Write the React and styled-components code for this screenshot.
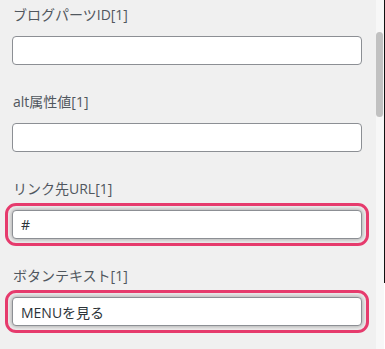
import React from 'react';
import styled, { createGlobalStyle } from 'styled-components';

const GlobalStyle = createGlobalStyle`
    html, body {
        margin: 0;
        padding: 0;
        background: #f0f0f0;
    }
    * { box-sizing: border-box; }
`;

const Frame = styled.div`
    display: flex;
    width: 385px;
    height: 349px;
    overflow: hidden;
    font-family: "Open Sans", "Noto Sans CJK JP", sans-serif;
`;

const Panel = styled.div`
    flex: 1;
    background: #f0f0f0;
    padding: 5px 14px 0 12px;
`;

const Field = styled.div`
    margin-bottom: 27px;
`;

const Label = styled.div`
    height: 20px;
    line-height: 20px;
    margin: 0 0 11px 1px;
    font-size: 14px;
    color: #50575e;
`;

const Input = styled.input`
    display: block;
    width: 100%;
    height: 29px;
    padding: 0 8px;
    border: 1px solid #8c8f94;
    border-radius: 4px;
    background: #fff;
    font-family: inherit;
    font-size: 14px;
    color: #2c3338;
    ${({ $highlighted }) => $highlighted && `
        outline: 3.5px solid #e63b6d;
        outline-offset: 4.5px;
        box-shadow: 0 0 4px 1px rgba(0,0,0,0.28);
    `}
`;

const Track = styled.div`
    width: 8px;
    background: #f7f7f7;
    padding: 32px 1px 0 0;
`;

const Thumb = styled.div`
    height: 85px;
    border-radius: 4px;
    background: #c1c1c1;
`;

const Edge = styled.div`
    width: 1px;
    display: flex;
    flex-direction: column;
`;

const EdgeLine = styled.div`
    height: 283px;
    background: #111;
`;

const EdgeRest = styled.div`
    flex: 1;
    background: #fff;
`;

const fields = [
    { label: 'ブログパーツID[1]', value: '' },
    { label: 'alt属性値[1]', value: '' },
    { label: 'リンク先URL[1]', value: '#', highlighted: true },
    { label: 'ボタンテキスト[1]', value: 'MENUを見る', highlighted: true },
];

export default function App() {
    return <>
        <GlobalStyle />
        <Frame>
            <Panel>
                {fields.map((f) => (
                    <Field key={f.label}>
                        <Label>{f.label}</Label>
                        <Input $highlighted={f.highlighted} defaultValue={f.value} readOnly />
                    </Field>
                ))}
            </Panel>
            <Track>
                <Thumb />
            </Track>
            <Edge>
                <EdgeLine />
                <EdgeRest />
            </Edge>
        </Frame>
    </>;
}
